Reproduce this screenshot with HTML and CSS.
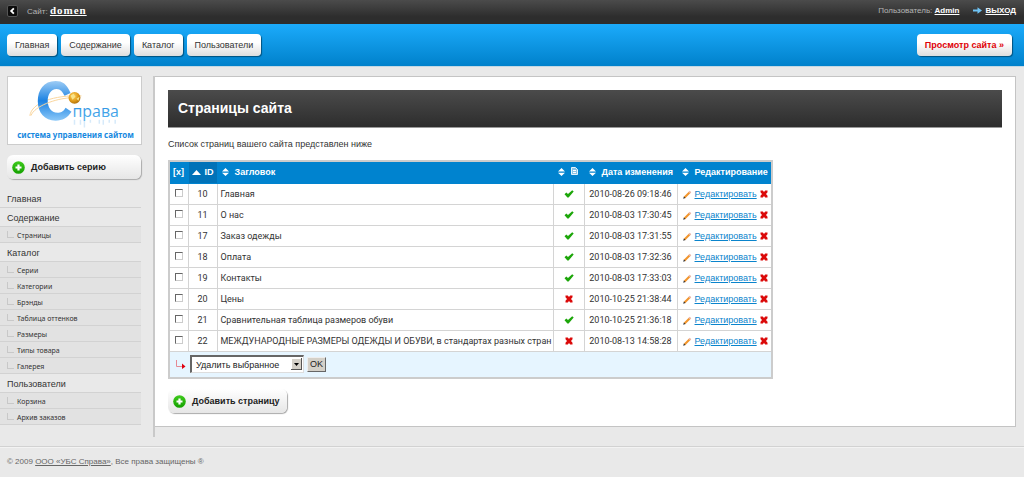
FILE: index.html
```html
<!DOCTYPE html>
<html lang="ru">
<head>
<meta charset="utf-8">
<title>Страницы сайта</title>
<link rel="stylesheet" href="styles.css">
</head>
<body>
<svg class="defs" aria-hidden="true">
  <defs>
    <linearGradient id="g-plus" x1="0" y1="0" x2="0" y2="1"><stop offset="0" stop-color="#3fcb1c"/><stop offset="1" stop-color="#14a000"/></linearGradient>
    <linearGradient id="g-c" x1="0" y1="0" x2="0" y2="1"><stop offset="0" stop-color="#9dccf5"/><stop offset=".5" stop-color="#1b82e2"/><stop offset="1" stop-color="#8cc8f8"/></linearGradient>
    <linearGradient id="g-word" x1="0" y1="0" x2="0" y2="1"><stop offset="0" stop-color="#2187de"/><stop offset="1" stop-color="#57b4ee"/></linearGradient>
    <radialGradient id="g-globe" cx=".4" cy=".35" r=".7"><stop offset="0" stop-color="#ffd766"/><stop offset=".6" stop-color="#e09a18"/><stop offset="1" stop-color="#a86a08"/></radialGradient>
  </defs>
  <symbol id="plus" viewBox="0 0 13 13"><circle cx="6.500" cy="6.500" r="6.300" fill="url(#g-plus)"/><path d="M6.500 3.500v6M3.500 6.500h6" stroke="#fff" stroke-width="2.200"/></symbol>
  <symbol id="check" viewBox="0 0 10 8"><path d="M.5 4.200 2.300 2.600l1.700 1.500L8.200.2l1.500 1.200L4.600 7.500H3.400z" fill="#1da60a"/></symbol>
  <symbol id="cross" viewBox="0 0 8 8"><path d="M.5.500h2.300L4 2 5.200.500h2.300v1.700L6 4l1.500 1.800v1.700H5.200L4 6 2.800 7.500H.5V5.800L2 4 .5 2.200z" fill="#db0a0a"/></symbol>
  <symbol id="pencil" viewBox="0 0 9 9"><path d="m1.500 7.500 5-5" stroke="#f2962d" stroke-width="2.200"/><path d="m6.300 2.700 1.200-1.200" stroke="#e8b0a0" stroke-width="2.200"/><path d="m.2 8.800.700-2.300 1.600 1.600z" fill="#222"/></symbol>
  <symbol id="sort" viewBox="0 0 7 8"><path d="M0 3.500 3.500 0 7 3.500zM0 4.700h7L3.500 8z" fill="#fff"/></symbol>
  <symbol id="page" viewBox="0 0 7 8"><path d="M.5.500h4l2 2v5h-6z" fill="#8cc4e6" stroke="#e4f3fc"/><path d="M2 3.500h3M2 5.500h3" stroke="#fff"/></symbol>
</svg>

<header class="topbar">
  <button class="back" type="button" aria-label="Назад"><svg viewBox="0 0 10 10"><path d="M6.500 2 3.500 5l3 3" fill="none" stroke="#fff" stroke-width="2"/></svg></button>
  <span class="site">Сайт: <a href="#">domen</a></span>
  <span class="user">Пользователь: <a href="#">Admin</a></span>
  <svg class="exit-icon" viewBox="0 0 9 7"><path d="M0 2.600h4.500V.2L9 3.500 4.500 6.800V4.400H0z" fill="#6fc3f5"/></svg>
  <a class="exit" href="#">ВЫХОД</a>
</header>

<nav class="mainnav">
  <a href="#">Главная</a>
  <a href="#">Содержание</a>
  <a href="#">Каталог</a>
  <a href="#">Пользователи</a>
  <a class="preview" href="#">Просмотр сайта »</a>
</nav>

<div class="layout">
  <aside class="sidebar">
    <div class="logo">
      <svg viewBox="0 0 134 67" role="img" aria-label="Справа — система управления сайтом">
        <path d="M22 39C24 26 46 18 74 19" fill="none" stroke="#f9d59c"/>
        <path d="M63 16C59 7 55 4 48 4 36 4 30 13 30 24.500S37 44 48 44c7 0 12-3 16-9l-6-4c-2 4-5 5-8 5-7 0-10-6-10-12s3-12 9-12c4 0 6 3 8 7z" fill="url(#g-c)"/>
        <path d="M23 39C27 29 48 22 62 21" fill="none" stroke="#f9d59c"/>
        <circle cx="67" cy="21" r="6" fill="url(#g-globe)"/>
        <path d="m63 19 3-2 2 3-3 3zM69 22l3-2-1 4z" fill="#f8e48a"/>
        <path d="M67 43v5M73 43v5M77 43v8M83 43v3M92 43v4M96 43v5M102 43v3M108 43v4" stroke="#d6eafa" stroke-width="1.500"/>
        <text class="logo-word" x="65" y="40">права</text>
        <text class="logo-tag" x="68" y="61" text-anchor="middle">система управления сайтом</text>
      </svg>
    </div>
    <a class="add" href="#"><svg><use href="#plus"/></svg>Добавить серию</a>
    <ul class="menu">
      <li><a href="#">Главная</a></li>
      <li><a href="#">Содержание</a></li>
      <li class="sub"><a href="#">Страницы</a></li>
      <li><a href="#">Каталог</a></li>
      <li class="sub"><a href="#">Серии</a></li>
      <li class="sub"><a href="#">Категории</a></li>
      <li class="sub"><a href="#">Брэнды</a></li>
      <li class="sub"><a href="#">Таблица оттенков</a></li>
      <li class="sub"><a href="#">Размеры</a></li>
      <li class="sub"><a href="#">Типы товара</a></li>
      <li class="sub"><a href="#">Галерея</a></li>
      <li><a href="#">Пользователи</a></li>
      <li class="sub"><a href="#">Корзина</a></li>
      <li class="sub"><a href="#">Архив заказов</a></li>
    </ul>
  </aside>

  <div class="divider">
    <main class="panel">
      <h1>Страницы сайта</h1>
      <p>Список страниц вашего сайта представлен ниже</p>
      <table class="pages">
        <thead>
          <tr>
            <th class="c-check">[x]</th>
            <th class="c-id"><svg viewBox="0 0 9 5"><path d="M0 5 4.500 0 9 5z" fill="#fff"/></svg>ID</th>
            <th class="c-title"><svg><use href="#sort"/></svg>Загловок</th>
            <th class="c-state"><svg><use href="#sort"/></svg><svg class="doc"><use href="#page"/></svg></th>
            <th class="c-date"><svg><use href="#sort"/></svg>Дата изменения</th>
            <th class="c-edit"><svg><use href="#sort"/></svg>Редактирование</th>
          </tr>
        </thead>
        <tbody>
          <tr><td class="mid"><input type="checkbox" aria-label="10"></td><td class="mid">10</td><td>Главная</td><td class="mid"><svg class="check"><use href="#check"/></svg></td><td class="mid">2010-08-26 09:18:46</td><td><span class="edit"><svg><use href="#pencil"/></svg><a href="#">Редактировать</a><svg class="x"><use href="#cross"/></svg></span></td></tr>
          <tr><td class="mid"><input type="checkbox" aria-label="11"></td><td class="mid">11</td><td>О нас</td><td class="mid"><svg class="check"><use href="#check"/></svg></td><td class="mid">2010-08-03 17:30:45</td><td><span class="edit"><svg><use href="#pencil"/></svg><a href="#">Редактировать</a><svg class="x"><use href="#cross"/></svg></span></td></tr>
          <tr><td class="mid"><input type="checkbox" aria-label="17"></td><td class="mid">17</td><td>Заказ одежды</td><td class="mid"><svg class="check"><use href="#check"/></svg></td><td class="mid">2010-08-03 17:31:55</td><td><span class="edit"><svg><use href="#pencil"/></svg><a href="#">Редактировать</a><svg class="x"><use href="#cross"/></svg></span></td></tr>
          <tr><td class="mid"><input type="checkbox" aria-label="18"></td><td class="mid">18</td><td>Оплата</td><td class="mid"><svg class="check"><use href="#check"/></svg></td><td class="mid">2010-08-03 17:32:36</td><td><span class="edit"><svg><use href="#pencil"/></svg><a href="#">Редактировать</a><svg class="x"><use href="#cross"/></svg></span></td></tr>
          <tr><td class="mid"><input type="checkbox" aria-label="19"></td><td class="mid">19</td><td>Контакты</td><td class="mid"><svg class="check"><use href="#check"/></svg></td><td class="mid">2010-08-03 17:33:03</td><td><span class="edit"><svg><use href="#pencil"/></svg><a href="#">Редактировать</a><svg class="x"><use href="#cross"/></svg></span></td></tr>
          <tr><td class="mid"><input type="checkbox" aria-label="20"></td><td class="mid">20</td><td>Цены</td><td class="mid"><svg class="x"><use href="#cross"/></svg></td><td class="mid">2010-10-25 21:38:44</td><td><span class="edit"><svg><use href="#pencil"/></svg><a href="#">Редактировать</a><svg class="x"><use href="#cross"/></svg></span></td></tr>
          <tr><td class="mid"><input type="checkbox" aria-label="21"></td><td class="mid">21</td><td>Сравнительная таблица размеров обуви</td><td class="mid"><svg class="check"><use href="#check"/></svg></td><td class="mid">2010-10-25 21:36:18</td><td><span class="edit"><svg><use href="#pencil"/></svg><a href="#">Редактировать</a><svg class="x"><use href="#cross"/></svg></span></td></tr>
          <tr><td class="mid"><input type="checkbox" aria-label="22"></td><td class="mid">22</td><td>МЕЖДУНАРОДНЫЕ РАЗМЕРЫ ОДЕЖДЫ И ОБУВИ, в стандартах разных стран</td><td class="mid"><svg class="x"><use href="#cross"/></svg></td><td class="mid">2010-08-13 14:58:28</td><td><span class="edit"><svg><use href="#pencil"/></svg><a href="#">Редактировать</a><svg class="x"><use href="#cross"/></svg></span></td></tr>
        </tbody>
        <tfoot>
          <tr><td colspan="6">
            <div class="bulk">
              <svg class="branch" viewBox="0 0 10 9"><path d="M.5 0v6.500H7" fill="none" stroke="#e58a94"/><path d="M6 3.500 9.500 6.500 6 9z" fill="#e0000f"/></svg>
              <div class="picker">
                <select aria-label="Действие"><option>Удалить выбранное</option></select>
                <svg class="arrow" viewBox="0 0 11 12"><path d="M0 0h11v12H0z" fill="#555"/><path d="M0 0h10v11H0z" fill="#fff"/><path d="M1 1h9v10H1z" fill="#d4d0c8"/><path d="M3 5h5L5.500 8z" fill="#000"/></svg>
              </div>
              <button class="ok" type="button">OK</button>
            </div>
          </td></tr>
        </tfoot>
      </table>
      <a class="add" href="#"><svg><use href="#plus"/></svg>Добавить страницу</a>
    </main>
  </div>
</div>

<footer class="footer">© 2009 <a href="#">ООО «УБС Справа»</a>, Все права защищены ®</footer>
</body>
</html>
```
FILE: styles.css
```css
* { box-sizing: border-box; }
body { margin: 0; background: #e9e9e9; color: #333; font: 9px/12px "Liberation Sans", Arial, sans-serif; }
a { color: inherit; }
svg { display: block; flex: none; }
.defs { position: absolute; width: 0; height: 0; }

.topbar { display: flex; align-items: center; height: 24px; padding: 0 8px 3px 7px; background: linear-gradient(#4b4b4b, #2d2d2d 70%); color: #b5b5b5; font-size: 8px; }
.topbar a { color: #fff; font-weight: bold; }
.back { width: 11px; height: 12px; margin-right: 9px; padding: 0; border: 1px solid #555; border-radius: 2px; background: #0c0c0c; }
.back svg { width: 9px; height: 10px; }
.site a { font: bold 11px/12px "Liberation Serif", serif; letter-spacing: 1px; }
.user { margin-left: auto; }
.exit-icon { width: 9px; height: 7px; margin: 0 3px 0 14px; }

.mainnav { display: flex; align-items: center; gap: 4px; height: 42px; padding: 0 12px 0 7px; background: linear-gradient(#1cabfb, #0081cb); box-shadow: 0 1px #c3d8e4; }
.mainnav a { padding: 5px 8px; border-radius: 4px; background: linear-gradient(#fff 40%, #dedede); box-shadow: 1px 1px 1px #00527f; text-decoration: none; }
.mainnav .preview { margin-left: auto; color: #e00007; font-weight: bold; }

.layout { display: flex; padding: 10px 8px 0 0; }
.sidebar { flex: none; width: 153px; }
.logo { width: 135px; height: 69px; margin: 0 0 10px 7px; border: 1px solid #ccc; background: #fff; }
.logo-word { fill: url(#g-word); font: 16px "Open Sans", sans-serif; }
.logo-tag { fill: #1789e0; font: bold 8px "Noto Sans", sans-serif; }
.add { display: flex; align-items: center; gap: 6px; width: 134px; height: 24px; padding-left: 5px; border-radius: 6px; background: linear-gradient(#fff, #e6e6e6); box-shadow: 1px 1px 1px #aaa; color: #222; font-weight: bold; text-decoration: none; }
.add svg { width: 13px; height: 13px; }
.sidebar .add { margin-left: 7px; }

.menu { width: 141px; margin: 10px 0 0; padding: 0; list-style: none; }
.menu li { height: 19px; padding: 4px 0 0 7px; border-bottom: 1px solid #d2d2d2; }
.menu a { text-decoration: none; }
.menu .sub { display: flex; gap: 3px; height: 16px; padding-top: 3px; background: #e2e2e2; font: 7px/12px "Noto Sans", sans-serif; }
.menu .sub::before { content: ""; width: 6px; height: 6px; margin-top: 1px; border: solid #c8c8c8; border-width: 0 0 1px 1px; }

.divider { flex: 1; padding-bottom: 10px; border-left: 2px solid #c9c9c9; }
.panel { padding: 13px 13px 13px 13px; border: 1px solid #c4c4c4; border-left: 0; background: #fff; }
h1 { margin: 0; padding: 10px; border-bottom: 1px solid #999; background: linear-gradient(#4b4b4b, #2d2d2d); color: #fff; font: bold 14px/17px "Liberation Sans", Arial, sans-serif; }
p { margin: 10px 0; }

.pages { border: 2px solid #ccc; border-collapse: collapse; }
.pages th, .pages td { height: 21px; padding: 0 1px 0 3px; border: 1px solid #d4d4d4; text-align: left; white-space: nowrap; }
.pages th { height: 22px; border-color: #0083cf; background: #0083cf; color: #fff; }
.pages tbody td { padding-top: 1px; font-family: Roboto, "Liberation Sans", sans-serif; }
.pages th svg { display: inline-block; width: 7px; height: 8px; margin: 0 6px 0 1px; vertical-align: -1px; }
.pages th.c-id { background: #0072b8; }
.pages th.c-id svg { width: 9px; height: 5px; margin: 0 4px 0 0; vertical-align: 0; }
.pages th .doc { margin: 0; vertical-align: 0; }
.pages tbody .mid { padding: 1px 2px 0; text-align: center; }
.pages td svg { margin: 0 auto; }
.c-check { width: 19px; }
.c-id { width: 29px; }
.c-title { width: 335px; }
.c-state { width: 31px; }
.c-date { width: 93px; }
.c-edit { width: 95px; }
.check { width: 10px; height: 8px; }
.x { width: 8px; height: 8px; }
.edit { display: flex; align-items: center; gap: 3px; padding-left: 2px; font-family: "Liberation Sans", Arial, sans-serif; }
.edit a { color: #0a84cc; }
.pages .edit svg { margin: 0; }
.edit svg:first-child { width: 9px; height: 9px; }
input[type="checkbox"] { display: block; appearance: none; width: 8px; height: 8px; margin: 0 auto 3px; border: 1px solid; border-color: #666 #ccc #ccc #666; background: #fff; }

.pages tfoot td { height: 27px; border-color: #ccc; background: #e6f5ff; }
.bulk { display: flex; align-items: center; gap: 3px; padding-left: 3px; }
.pages .branch { width: 10px; height: 9px; margin: 0; }
.picker { position: relative; width: 114px; margin-left: 1px; }
.picker select { display: block; appearance: none; width: 100%; height: 18px; padding: 0 4px; border: solid; border-width: 2px 1px 1px 2px; border-color: #666 #ddd #ddd #666; border-radius: 0; background: #fff; color: #222; font: inherit; }
.pages .arrow { position: absolute; top: 3px; right: 2px; width: 11px; height: 12px; margin: 0; pointer-events: none; }
.ok { width: 19px; height: 15px; padding: 0; border: 1px solid; border-color: #eee #666 #666 #eee; background: #d4d0c8; color: #222; font: inherit; }
.panel .add { width: 119px; margin-top: 10px; }

.footer { margin-top: 9px; padding: 9px 7px; border-top: 1px solid #d2d2d2; box-shadow: inset 0 1px #f3f3f3; color: #666; font-size: 8px; }
```
